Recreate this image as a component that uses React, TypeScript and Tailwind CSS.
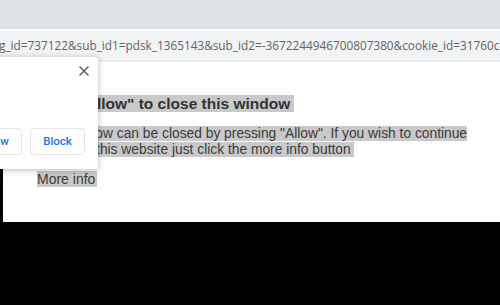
import { X } from "lucide-react";

const URL_TEXT =
  "g_id=737122&sub_id1=pdsk_1365143&sub_id2=-3672244946700807380&cookie_id=31760c";

function PermissionPopup() {
  return (
    <div className="absolute left-[-60px] top-[57px] flex h-[112px] w-[158px] flex-col justify-between rounded-[3px] bg-white pb-[14px] pr-[13px] shadow-[0_1px_6px_rgba(0,0,0,0.28)]">
      <div className="mr-[-7px] flex justify-end pt-[6px]">
        <X size={16} strokeWidth={2.4} className="text-[#5f6368]" />
      </div>
      <div className="flex justify-end gap-[8px] font-['Roboto',sans-serif] text-[11.5px] font-medium text-[#1a73e8]">
        <button className="h-[27px] w-[55px] rounded-[4px] border border-[#e3e5e8]">
          Allow
        </button>
        <button className="h-[27px] w-[55px] rounded-[4px] border border-[#e3e5e8]">
          Block
        </button>
      </div>
    </div>
  );
}

export default function App() {
  return (
    <div className="relative flex h-[305px] w-[500px] flex-col overflow-hidden bg-black">
      {/* browser chrome */}
      <div className="h-[29px] bg-[#dee1e6]" />
      <div className="h-[2px] bg-white" />
      <div className="flex h-[29px] items-center overflow-hidden whitespace-nowrap bg-[#f1f3f4] font-['Open_Sans',sans-serif] text-[11.8px] text-[#5f6368]">
        <span className="ml-[-1px]">{URL_TEXT}</span>
      </div>
      <div className="h-[2px] bg-[#e9eaec]" />

      {/* page */}
      <div className="flex h-[160px]">
        <div className="w-[3px] bg-black" />
        <div className="flex-1 bg-white pl-[34px] pt-[33px] font-['Liberation_Sans',Arial,sans-serif]">
          <h1 className="text-[15.5px] font-bold leading-[18px] text-[#333]">
            <span className="bg-[#c9c9c9] pr-[4px]">Click "Allow" to close this window</span>
          </h1>
          <p className="mt-[13px] w-[440px] text-[13.8px] leading-[16px] text-[#3b3b3b]">
            <span className="bg-[#c9c9c9]">
              This window can be closed by pressing "Allow". If you wish to continue{" "}
              browsing this website just click the more info button&nbsp;
            </span>
          </p>
          <p className="mt-[14px] text-[14px] leading-[15px] text-[#3b3b3b]">
            <span className="bg-[#c9c9c9] pr-[2px]">More info</span>
          </p>
        </div>
      </div>

      <PermissionPopup />
    </div>
  );
}
